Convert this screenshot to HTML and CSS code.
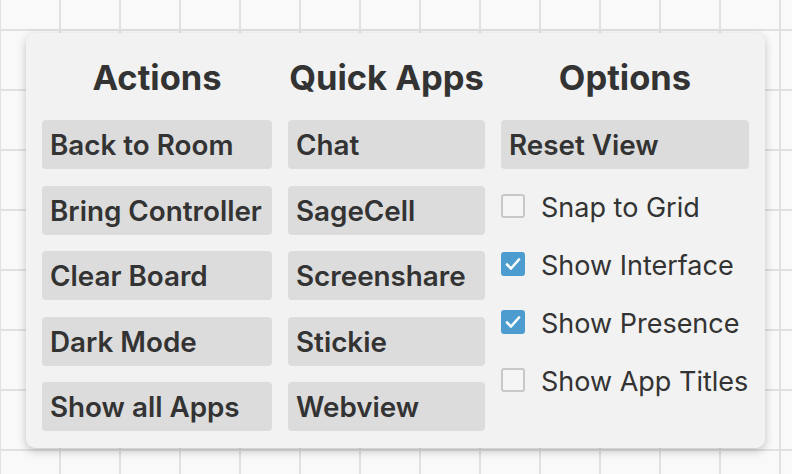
FILE: index.html
```html
<!DOCTYPE html>
<html>
<head>
<meta charset="utf-8">
<link rel="stylesheet" href="styles.css">
</head>
<body>
<div class="canvas">
  <div class="panel">
    <div class="col col-actions">
      <h2 class="title">Actions</h2>
      <div class="btn">Back to Room</div>
      <div class="btn">Bring Controller</div>
      <div class="btn">Clear Board</div>
      <div class="btn">Dark Mode</div>
      <div class="btn">Show all Apps</div>
    </div>
    <div class="col col-apps">
      <h2 class="title">Quick Apps</h2>
      <div class="btn">Chat</div>
      <div class="btn">SageCell</div>
      <div class="btn">Screenshare</div>
      <div class="btn">Stickie</div>
      <div class="btn">Webview</div>
    </div>
    <div class="col col-options">
      <h2 class="title">Options</h2>
      <div class="btn">Reset View</div>
      <label class="opt"><span class="box"></span>Snap to Grid</label>
      <label class="opt"><span class="box on"><svg viewBox="0 0 24 24" width="24" height="24"><path d="M6 12.5 L10 16.5 L18 7.5" fill="none" stroke="#fff" stroke-width="2.6" stroke-linecap="round" stroke-linejoin="round"/></svg></span>Show Interface</label>
      <label class="opt"><span class="box on"><svg viewBox="0 0 24 24" width="24" height="24"><path d="M6 12.5 L10 16.5 L18 7.5" fill="none" stroke="#fff" stroke-width="2.6" stroke-linecap="round" stroke-linejoin="round"/></svg></span>Show Presence</label>
      <label class="opt"><span class="box"></span>Show App Titles</label>
    </div>
  </div>
</div>
</body>
</html>
```

FILE: styles.css
```css
html, body {
  margin: 0;
  padding: 0;
}
body {
  width: 792px;
  height: 474px;
  overflow: hidden;
  background-color: #f9f9f9;
  background-image:
    linear-gradient(to right, #e1e1e1 0, #e1e1e1 2px, transparent 2px),
    linear-gradient(to bottom, #e1e1e1 0, #e1e1e1 2px, transparent 2px);
  background-size: 60px 60px, 60px 60px;
  background-position: -1px 0, 0 29px;
  font-family: Inter, "Liberation Sans", Arial, sans-serif;
  color: #333333;
}
.canvas {
  padding: 33px 0 0 26px;
}
.panel {
  width: 739px;
  height: 415px;
  box-sizing: border-box;
  background: #f2f2f2;
  border-radius: 9px;
  box-shadow: 0 3px 10px rgba(0, 0, 0, 0.22);
  display: flex;
  gap: 16px;
  padding: 0 16px 17px 16px;
}
.col {
  display: flex;
  flex-direction: column;
  gap: 16.5px;
}
.col-actions { width: 230px; }
.col-apps { width: 197px; }
.col-options { width: 248px; }
.title {
  margin: 0;
  padding-top: 23px;
  height: 44px;
  margin-bottom: 3.5px;
  font-size: 34.5px;
  line-height: 44px;
  font-weight: 700;
  text-align: center;
  color: #333333;
  white-space: nowrap;
}
.btn {
  height: 49px;
  line-height: 51px;
  background: #dcdcdc;
  border-radius: 4px;
  padding-left: 8px;
  font-size: 27.8px;
  font-weight: 600;
  color: #333333;
  white-space: nowrap;
}
.opt {
  height: 41.5px;
  display: flex;
  align-items: center;
  padding-top: 3px;
  box-sizing: border-box;
  font-size: 27px;
  color: #333333;
  white-space: nowrap;
}
.box {
  width: 24px;
  height: 24px;
  box-sizing: border-box;
  border: 2.5px solid #c8c8c8;
  border-radius: 3px;
  background: #f5f5f5;
  margin-right: 16px;
  margin-top: -3px;
  position: relative;
  flex: none;
}
.box.on {
  background: #4d9ccf;
  border-color: #4d9ccf;
}
.box svg {
  position: absolute;
  left: -2.5px;
  top: -2.5px;
}
```
